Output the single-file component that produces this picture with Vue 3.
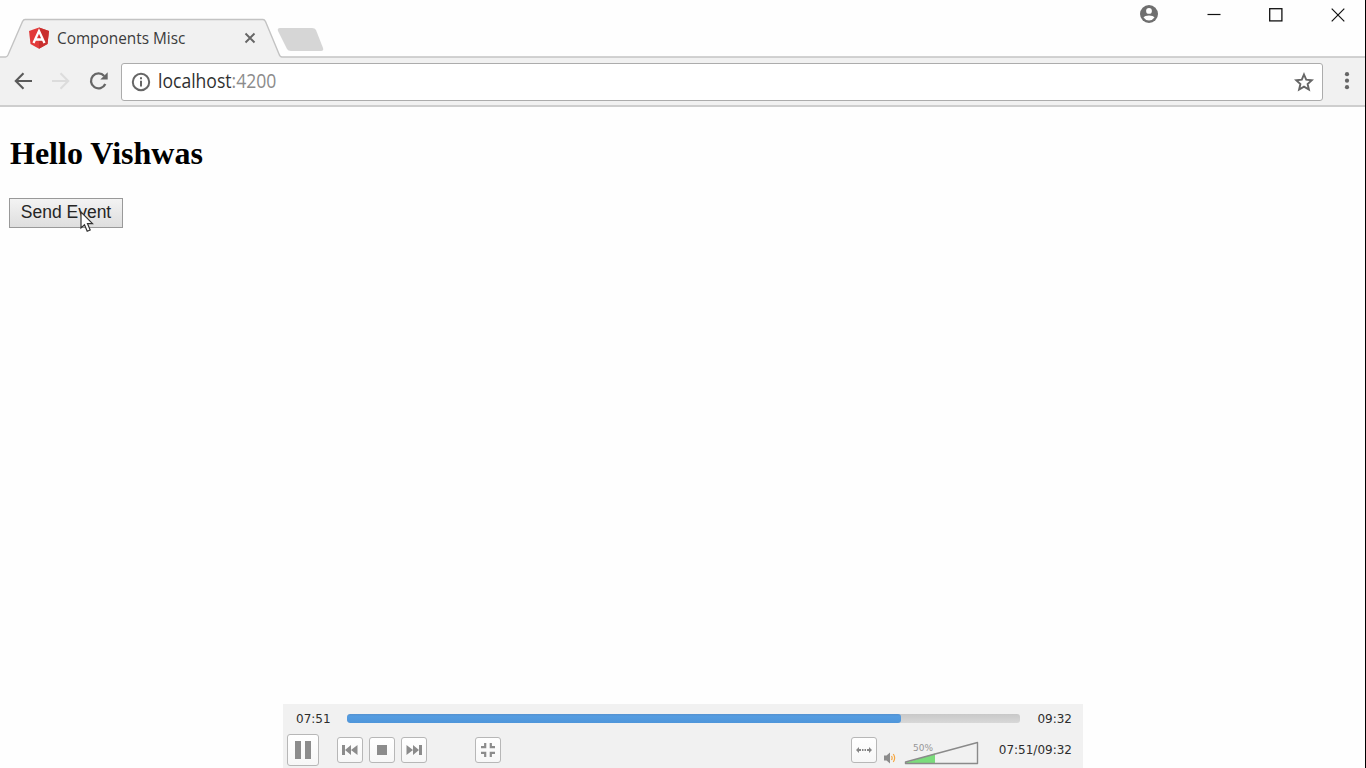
<script setup>
const title = 'Components Misc'
const elapsed = '07:51'
const duration = '09:32'
const progress = 82.3
</script>

<template>
  <div class="window">
    <header class="titlebar">
      <svg class="tab-shape" width="1365" height="58" viewBox="0 0 1365 58">
        <path d="M0 58V57H5.500Q7 57 8 55L22.500 21.500Q23.500 19.500 25 19.500H263Q264.500 19.500 265.500 21.500L279 54Q280 57 282 57H1365V58Z" fill="#f1f1f1" />
        <path d="M0 57H5.500Q7 57 8 55L22.500 21.500Q23.500 19.500 25 19.500H263Q264.500 19.500 265.500 21.500L279 54Q280 57 282 57H1365" fill="none" stroke="#c3c3c3" stroke-width="1.400" />
        <path d="M280 28H312Q315 28 316 30L323 48Q324 51 321 51H291Q288 51 287 49L278 31Q277 28 280 28Z" fill="#d6d6d6" />
      </svg>
      <div class="tab">
        <svg width="22" height="22" viewBox="0 0 22 22">
          <path d="M11 .5L21 4L19.500 17L11 21.700L2.500 17L1 4Z" fill="#e23a3a" />
          <path d="M11 .5L21 4L19.500 17L11 21.700Z" fill="#c9302f" />
          <path d="M5.500 16L11 4L16.500 16M7.600 12.500H14.400" fill="none" stroke="#fff" stroke-width="2.300" />
        </svg>
        <span class="tab-title">{{ title }}</span>
        <svg class="tab-close" width="12" height="12" viewBox="0 0 12 12">
          <path d="M1.500 1.500L10.500 10.500M10.500 1.500L1.500 10.500" stroke="#666" stroke-width="1.900" />
        </svg>
      </div>
      <div class="controls">
        <svg class="profile" width="18" height="18" viewBox="0 0 18 18">
          <circle cx="9" cy="9" r="9" fill="#6f6f6f" />
          <circle cx="9" cy="5.900" r="2.900" fill="#fff" />
          <path d="M3.500 12.600C4.500 9.900 13.500 9.900 14.500 12.600Q12.600 15.500 9 15.500T3.500 12.600Z" fill="#fff" />
        </svg>
        <svg width="14" height="14" viewBox="0 0 14 14"><path d="M.5 6.500H13.500" stroke="#111" stroke-width="1.200" /></svg>
        <svg width="14" height="14" viewBox="0 0 14 14"><rect x=".7" y=".7" width="12.200" height="12.200" fill="none" stroke="#111" stroke-width="1.300" /></svg>
        <svg width="14" height="14" viewBox="0 0 14 14"><path d="M.7 .7L13.300 13.300M13.300 .7L.7 13.300" stroke="#111" stroke-width="1.200" /></svg>
      </div>
    </header>

    <nav class="toolbar">
      <svg class="arrow" width="18" height="18" viewBox="0 0 18 18"><path d="M18 9H2M9.500 1.300L1.800 9L9.500 16.700" fill="none" stroke="#5a5a5a" stroke-width="2.100" /></svg>
      <svg class="arrow forward" width="18" height="18" viewBox="0 0 18 18"><path d="M0 9H16M8.500 1.300L16.200 9L8.500 16.700" fill="none" stroke="#dcdcdc" stroke-width="2.100" /></svg>
      <svg class="arrow reload" width="20" height="20" viewBox="0 0 20 20">
        <path d="M16.300 13A7.500 7.500 0 1 1 15.200 5" fill="none" stroke="#666" stroke-width="2.300" />
        <path d="M18.700 1.200V8.500H11.300Z" fill="#666" />
      </svg>
      <div class="address">
        <svg width="20" height="20" viewBox="0 0 20 20">
          <circle cx="10" cy="10" r="8.200" fill="none" stroke="#666" stroke-width="2" />
          <path d="M10 8.700V14.500M10 5.300V7.300" stroke="#666" stroke-width="2" />
        </svg>
        <span class="url">localhost<span class="port">:4200</span></span>
        <svg class="star" width="20" height="20" viewBox="0 0 20 20">
          <path d="M10 2.500L12.200 7.700L17.800 8.200L13.600 12L14.900 17.500L10 14.600L5.100 17.500L6.400 12L2.200 8.200L7.800 7.700Z" fill="none" stroke="#666" stroke-width="1.900" />
        </svg>
      </div>
      <svg class="dots" width="6" height="20" viewBox="0 0 6 20" fill="#666">
        <circle cx="3" cy="3.200" r="2.100" /><circle cx="3" cy="9.700" r="2.100" /><circle cx="3" cy="16.200" r="2.100" />
      </svg>
    </nav>

    <main class="page">
      <h2>Hello Vishwas</h2>
      <button class="send">Send Event</button>
      <svg class="cursor" width="14" height="22" viewBox="0 0 14 22">
        <path d="M1 1V17L4.500 13.800L7.200 20.300L10.200 19L7.500 12.700H12.500Z" fill="#fff" stroke="#333" stroke-width="1.200" />
      </svg>
    </main>

    <section class="player">
      <div class="timeline">
        <span>{{ elapsed }}</span>
        <div class="track"><div class="fill" :style="{ width: progress + '%' }"></div></div>
        <span>{{ duration }}</span>
      </div>
      <div class="buttons">
        <div class="key large">
          <svg width="16" height="18" viewBox="0 0 16 18" fill="#8c8c8c"><path d="M0 0H6V18H0ZM10 0H16V18H10Z" /></svg>
        </div>
        <div class="key prev">
          <svg width="16" height="10" viewBox="0 0 16 10" fill="#8c8c8c"><path d="M0 0H3V10H0ZM9 0V10L3 5ZM15.500 0V10L9 5Z" /></svg>
        </div>
        <div class="key">
          <svg width="10" height="10" viewBox="0 0 10 10"><rect width="10" height="10" fill="#8c8c8c" /></svg>
        </div>
        <div class="key">
          <svg width="16" height="10" viewBox="0 0 16 10" fill="#8c8c8c"><path d="M16 0H13V10H16ZM7 0V10L13 5ZM.5 0V10L7 5Z" /></svg>
        </div>
        <div class="key shrink">
          <svg width="14" height="14" viewBox="0 0 14 14" fill="none" stroke="#8c8c8c" stroke-width="2.200">
            <path d="M0 4.200H4.200V0M9.800 0V4.200H14M0 9.800H4.200V14M9.800 14V9.800H14" />
          </svg>
        </div>
        <div class="key stretch">
          <svg width="16" height="6" viewBox="0 0 16 6" fill="#858585">
            <path d="M0 3L3 0V2H5V4H3V6ZM16 3L13 0V2H11V4H13V6ZM6 2H7.500V4H6ZM8.500 2H10V4H8.500Z" />
          </svg>
        </div>
        <svg class="speaker" width="12" height="12" viewBox="0 0 12 12">
          <path d="M0 3.500H2.500L6 .5V11.500L2.500 8.500H0Z" fill="#8c8c8c" />
          <path d="M7.500 4Q8.800 6 7.500 8M9.300 2Q12 6 9.300 10" fill="none" stroke="#f5a742" stroke-width="1.200" />
        </svg>
        <svg class="volume" width="76" height="26" viewBox="0 0 76 26">
          <path d="M2 22.500L31 13.500V23.500H2Z" fill="#7bdc7b" />
          <path d="M1.500 22L73.500 2.500V23.500H1.500Z" fill="none" stroke="#8a8a8a" stroke-width="1.400" stroke-linejoin="round" />
          <text x="9" y="11">50%</text>
        </svg>
        <span class="clock">{{ elapsed }}/{{ duration }}</span>
      </div>
    </section>
  </div>
</template>

<style>
body { margin: 0; overflow: hidden; }
</style>

<style scoped>
* { box-sizing: border-box; }
svg { display: block; flex: none; }
.window { position: relative; width: 1366px; height: 768px; overflow: hidden; display: flex; flex-direction: column; background: #fefefe; border-right: 1px solid #000; }
.titlebar { position: relative; height: 58px; flex: none; display: flex; justify-content: space-between; }
.tab-shape { position: absolute; left: 0; top: 0; }
.tab { position: relative; display: flex; align-items: center; height: 36px; margin-top: 20px; padding-left: 28px; width: 270px; }
.tab-title { margin: 0 0 1px 7px; font: 17px/22px "Open Sans", sans-serif; color: #3c3c3c; width: 187px; white-space: nowrap; transform: scaleX(0.903); transform-origin: left; }
.controls { display: flex; align-items: center; height: 30px; padding-right: 20px; gap: 48px; }
.profile { margin: 0 1px 2px 0; }
.toolbar { height: 49px; flex: none; display: flex; align-items: center; padding-left: 14px; background: #f1f1f1; border-bottom: 2px solid #cecece; }
.arrow { margin-bottom: 2px; }
.forward { margin-left: 20px; }
.reload { margin-left: 19px; }
.address { margin-left: 12px; width: 1202px; height: 38px; display: flex; align-items: center; padding: 0 8px 0 9px; background: #fff; border: 1px solid #acacac; border-radius: 3px; }
.url { margin: 0 0 2px 7px; font: 19.5px/24px "Open Sans", sans-serif; color: #303030; transform: scaleX(0.9); transform-origin: left; }
.port { color: #8b8b8b; }
.star { margin-left: auto; }
.dots { margin: 0 0 1px 21px; }
.page { position: relative; padding: 28px 9px 0; }
h2 { margin: 0 0 0 1px; font: bold 32px/36px "Liberation Serif", serif; color: #000; white-space: nowrap; }
.send { display: block; width: 114px; height: 30px; margin-top: 27px; padding: 0 0 2px; border: 1.5px solid #999; border-radius: 0; background: linear-gradient(#f3f3f3, #dedede); font: 17.5px/22px "Liberation Sans", sans-serif; color: #252525; white-space: nowrap; }
.cursor { position: absolute; left: 80px; top: 104px; }
.player { width: 800px; height: 64px; margin: auto 0 0 283px; background: #f1f1f1; font: 12px/16px "DejaVu Sans", sans-serif; color: #2d2d2d; }
.timeline { display: flex; align-items: center; height: 29px; padding: 0 11px 0 13px; justify-content: space-between; }
.track { width: 673px; height: 9px; margin-right: 1px; background: linear-gradient(#c8c8c8, #d8d8d8); border-radius: 3px; overflow: hidden; }
.fill { height: 100%; background: linear-gradient(#5591ce, #549ce1 25%, #4f96da); border-radius: 3px; }
.buttons { display: flex; align-items: center; height: 34px; padding: 0 11px 0 4px; }
.key { width: 26px; height: 26px; margin-right: 6px; flex: none; display: grid; place-items: center; border: 1px solid #b7b7b7; border-radius: 3px; background: linear-gradient(#fff, #f7f7f7); }
.large { width: 32px; height: 32px; margin-right: 18px; }
.shrink { margin-left: 42px; }
.stretch { margin: 0 0 0 344px; }
.speaker { margin: 16px 0 0 7px; }
.volume { margin: 5px 0 0 8px; }
.volume text { font: 9px "DejaVu Sans", sans-serif; fill: #969696; }
.clock { margin-left: auto; white-space: nowrap; }
</style>
